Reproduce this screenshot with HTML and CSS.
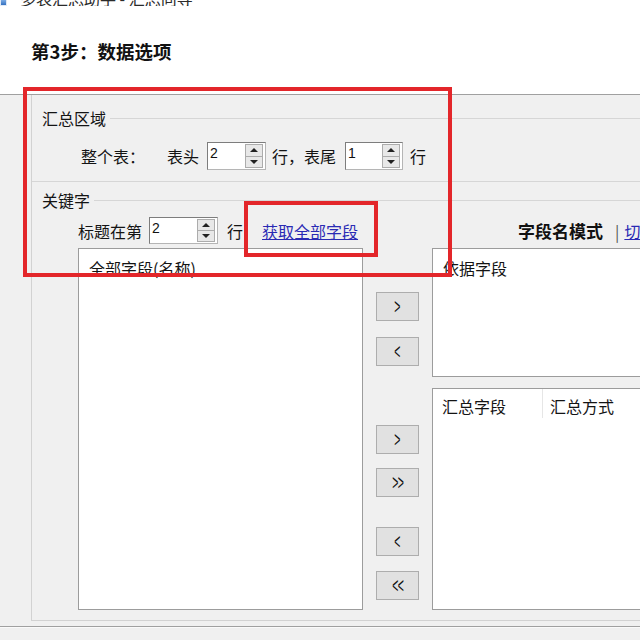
FILE: index.html
```html
<!DOCTYPE html>
<html lang="zh-CN">
<head>
<meta charset="utf-8">
<title>数据选项</title>
<link rel="stylesheet" href="styles.css">
</head>
<body>
<div class="window">
  <div class="titlebar">
    <span class="app-icon"></span>
    <span class="app-title">多表汇总助手 - 汇总向导</span>
  </div>
  <div class="header">
    <h1 class="step-title">第3步：数据选项</h1>
  </div>
  <div class="main">
    <div class="panel">
      <div class="group-label label-a"><span>汇总区域</span></div>
      <div class="row row-a">
        <span class="lbl">整个表：</span>
        <span class="lbl gap-head">表头</span>
        <div class="spin spin-a">
          <span class="spin-val">2</span>
          <div class="spin-btns"><span class="spin-btn"><i class="tri-up"></i></span><span class="spin-btn"><i class="tri-down"></i></span></div>
        </div>
        <span class="lbl gap-tail">行，表尾</span>
        <div class="spin spin-b">
          <span class="spin-val">1</span>
          <div class="spin-btns"><span class="spin-btn"><i class="tri-up"></i></span><span class="spin-btn"><i class="tri-down"></i></span></div>
        </div>
        <span class="lbl gap-row">行</span>
      </div>
      <div class="sep"></div>
      <div class="group-label label-b"><span>关键字</span></div>
      <div class="row row-b">
        <span class="lbl">标题在第</span>
        <div class="spin spin-c">
          <span class="spin-val">2</span>
          <div class="spin-btns"><span class="spin-btn"><i class="tri-up"></i></span><span class="spin-btn"><i class="tri-down"></i></span></div>
        </div>
        <span class="lbl gap-row2">行</span>
        <a class="link get-all" href="#">获取全部字段</a>
        <span class="mode"><b class="mode-name">字段名模式</b><span class="bar">|</span><a class="link" href="#">切换</a></span>
      </div>
      <div class="lists">
        <div class="listbox left-list">
          <div class="list-head">全部字段(名称)</div>
        </div>
        <div class="btn-col">
          <button class="nav-btn b1"><span class="chev">&gt;</span></button>
          <button class="nav-btn b2"><span class="chev">&lt;</span></button>
          <button class="nav-btn b3"><span class="chev">&gt;</span></button>
          <button class="nav-btn b4"><span class="chev dbl">&gt;&gt;</span></button>
          <button class="nav-btn b5"><span class="chev">&lt;</span></button>
          <button class="nav-btn b6"><span class="chev dbl">&lt;&lt;</span></button>
        </div>
        <div class="right-col">
          <div class="listbox top-list">
            <div class="list-head">依据字段</div>
          </div>
          <div class="listbox bottom-list">
            <div class="cols">
              <div class="col col-1">汇总字段</div>
              <div class="col col-2">汇总方式</div>
            </div>
          </div>
        </div>
      </div>
    </div>
    <div class="footer-line"></div>
  </div>
  <div class="red red-a"></div>
  <div class="red red-b"></div>
</div>
</body>
</html>
```

FILE: styles.css
```css
html, body {
  margin: 0;
  padding: 0;
}
body {
  width: 640px;
  height: 640px;
  overflow: hidden;
  background: #f0f0f0;
  font-family: "Noto Sans CJK SC", "Noto Sans", sans-serif;
  font-size: 16px;
  color: #141414;
}
.window {
  position: relative;
  width: 640px;
  height: 640px;
  overflow: hidden;
}
.titlebar {
  height: 6px;
  background: #fff;
  overflow: hidden;
  display: flex;
  align-items: flex-end;
}
.app-icon {
  width: 7px;
  height: 8px;
  box-sizing: border-box;
  background: linear-gradient(#8ab8ec, #3470c0);
  border: 1px solid #dfe9f6;
  flex: none;
}
.app-title {
  margin-left: 13px;
  font-size: 16px;
  line-height: 15px;
  color: #2a2a2a;
  white-space: nowrap;
}
.header {
  height: 89px;
  box-sizing: border-box;
  background: #fff;
  border-bottom: 1px solid #a0a0a0;
  padding: 33px 0 0 31px;
}
.step-title {
  margin: 0;
  font-size: 18.5px;
  line-height: 24px;
  font-weight: 700;
  color: #111;
}
.main {
  background: #f0f0f0;
}
.panel {
  margin-left: 31px;
  width: 680px;
  box-sizing: border-box;
  border-left: 1px solid #d2d2d2;
  border-bottom: 1px solid #d2d2d2;
  padding: 13px 0 10px 10px;
}
.group-label {
  display: flex;
  align-items: center;
  height: 20px;
  line-height: 20px;
  white-space: nowrap;
}
.group-label::after {
  content: "";
  flex: 1;
  margin-left: 4px;
  margin-top: 1px;
  border-top: 1px solid #d6d6d6;
}
.row {
  display: flex;
  align-items: center;
  white-space: nowrap;
}
.row-a {
  margin-top: 14px;
  height: 28px;
  padding-left: 39px;
}
.row-b {
  margin-top: 7px;
  height: 27px;
  padding-left: 36px;
}
.lbl {
  line-height: 20px;
}
.gap-head { margin-left: 22px; }
.gap-tail { margin-left: 6px; }
.gap-row { margin-left: 7px; }
.gap-row2 { margin-left: 9px; }
.sep {
  margin: 11px 0 0 -10px;
  border-top: 1px solid #d6d6d6;
}
.label-b {
  margin-top: 8px;
}
.spin {
  display: flex;
  height: 100%;
  box-sizing: border-box;
  border: 1px solid #7d7d7d;
  border-right-color: #b5b5b5;
  border-bottom-color: #b5b5b5;
  background: #fff;
  margin-left: 8px;
}
.spin-a { width: 59px; }
.spin-b { width: 58px; margin-left: 9px; }
.spin-c { width: 69px; margin-left: 7px; }
.spin-val {
  font-family: "Liberation Sans", "DejaVu Sans", sans-serif;
  font-size: 14px;
  line-height: 16px;
  padding: 2px 0 0 2px;
  color: #111;
}
.spin-btns {
  margin: 1px 2px 1px auto;
  width: 18px;
  display: flex;
  flex-direction: column;
}
.spin-btn {
  flex: 1;
  display: flex;
  align-items: center;
  justify-content: center;
  background: #e8e8e8;
  border: 1px solid #acacac;
}
.spin-btn + .spin-btn {
  border-top: none;
}
.tri-up {
  width: 0;
  height: 0;
  border-left: 4px solid transparent;
  border-right: 4px solid transparent;
  border-bottom: 4px solid #222;
}
.tri-down {
  width: 0;
  height: 0;
  border-left: 4px solid transparent;
  border-right: 4px solid transparent;
  border-top: 4px solid #222;
}
.link {
  color: #2a2ab4;
  text-decoration: underline;
  line-height: 20px;
}
.get-all {
  margin-left: 19px;
}
.mode {
  margin-left: 160px;
  display: flex;
  align-items: center;
  line-height: 20px;
}
.mode-name {
  font-size: 17px;
  font-weight: 700;
  color: #111;
}
.bar {
  margin: 0 5px 0 12px;
  color: #555;
}
.lists {
  margin: 4px 0 0 36px;
  display: flex;
  align-items: flex-start;
}
.listbox {
  box-sizing: border-box;
  border: 1px solid #9c9c9c;
  background: #fff;
}
.left-list {
  width: 285px;
  height: 362px;
}
.list-head {
  padding: 9px 0 0 10px;
  line-height: 20px;
  white-space: nowrap;
}
.btn-col {
  margin-left: 13px;
  width: 43px;
  display: flex;
  flex-direction: column;
}
.nav-btn {
  width: 43px;
  height: 29px;
  box-sizing: border-box;
  border: 1px solid #adadad;
  background: #e1e1e1;
  padding: 0;
  display: flex;
  align-items: center;
  justify-content: center;
  color: #111;
}
.chev {
  font-family: "Liberation Sans", "DejaVu Sans", sans-serif;
  font-size: 15px;
  line-height: 15px;
  display: inline-block;
  transform: scale(0.7, 1.45);
}
.chev.dbl {
  letter-spacing: -1px;
}
.b1 { margin-top: 44px; }
.b2 { margin-top: 16px; }
.b3 { margin-top: 59px; }
.b4 { margin-top: 14px; }
.b5 { margin-top: 30px; }
.b6 { margin-top: 15px; }
.right-col {
  margin-left: 13px;
  width: 260px;
  display: flex;
  flex-direction: column;
}
.top-list {
  height: 129px;
}
.bottom-list {
  margin-top: 11px;
  height: 222px;
}
.cols {
  display: flex;
  height: 29px;
}
.col {
  padding-top: 7px;
  line-height: 20px;
  white-space: nowrap;
  box-sizing: border-box;
}
.col-1 {
  width: 110px;
  padding-left: 9px;
  border-right: 1px solid #e6e6e6;
}
.col-2 {
  padding-left: 7px;
}
.footer-line {
  margin-top: 5px;
  border-top: 1px solid #a0a0a0;
  border-bottom: 1px solid #fafafa;
}
.red {
  position: absolute;
  box-sizing: border-box;
  border: 4px solid #e3262a;
}
.red-a {
  left: 23px;
  top: 87px;
  width: 429px;
  height: 190px;
}
.red-b {
  left: 244px;
  top: 201px;
  width: 134px;
  height: 56px;
}
```
